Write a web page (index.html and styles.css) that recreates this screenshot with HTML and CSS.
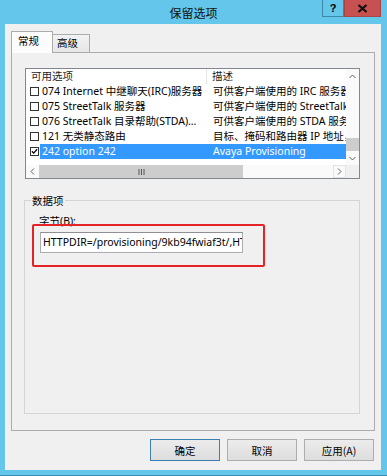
FILE: index.html
```html
<!DOCTYPE html>
<html lang="zh-CN">
<head>
    <meta charset="UTF-8">
    <title>保留选项</title>
    <link rel="stylesheet" href="styles.css">
</head>
<body>
    <div class="window">
        <!-- Title bar -->
        <div class="titlebar">
            <span class="title">保留选项</span>
            <div class="controls">
                <div class="btn-help">?</div>
                <div class="btn-close">
                    <svg width="11" height="9" viewBox="0 0 11 9"><path d="M1.5 1 L9.5 8 M9.5 1 L1.5 8" stroke="#111" stroke-width="2.2"/></svg>
                </div>
            </div>
        </div>

        <div class="client">
            <!-- Tabs -->
            <div class="tabs">
                <div class="tab active">常规</div>
                <div class="tab">高级</div>
            </div>

            <div class="panel">
                <!-- Options list -->
                <div class="listview">
                    <div class="rows">
                        <div class="header">
                            <div class="hcell col1">可用选项</div>
                            <div class="hcell col2">描述</div>
                        </div>
                        <div class="row">
                            <span class="check"><span class="box"></span></span>
                            <span class="cells">
                                <span class="c1">074 Internet 中继聊天(IRC)服务器</span>
                                <span class="c2">可供客户端使用的 IRC 服务器列表</span>
                            </span>
                        </div>
                        <div class="row">
                            <span class="check"><span class="box"></span></span>
                            <span class="cells">
                                <span class="c1">075 StreetTalk 服务器</span>
                                <span class="c2">可供客户端使用的 StreetTalk 服务器列表</span>
                            </span>
                        </div>
                        <div class="row">
                            <span class="check"><span class="box"></span></span>
                            <span class="cells">
                                <span class="c1">076 StreetTalk 目录帮助(STDA)服务器</span>
                                <span class="c2">可供客户端使用的 STDA 服务器列表</span>
                            </span>
                        </div>
                        <div class="row">
                            <span class="check"><span class="box"></span></span>
                            <span class="cells">
                                <span class="c1">121 无类静态路由</span>
                                <span class="c2">目标、掩码和路由器 IP 地址，按顺序</span>
                            </span>
                        </div>
                        <div class="row selected">
                            <span class="check"><span class="box">
                                <svg width="9" height="9" viewBox="0 0 9 9"><path d="M1.2 4.2 L3.4 6.6 L7.8 1.6" stroke="#000" stroke-width="1.6" fill="none"/></svg>
                            </span></span>
                            <span class="cells">
                                <span class="c1">242 option 242</span>
                                <span class="c2">Avaya Provisioning</span>
                            </span>
                        </div>
                    </div>

                    <div class="vscroll">
                        <div class="arrow-v">
                            <svg width="7" height="5" viewBox="0 0 7 5"><path d="M0.5 4 L3.5 1 L6.5 4" stroke="#606060" fill="none"/></svg>
                        </div>
                        <div class="track-v"></div>
                        <div class="thumb-v"></div>
                        <div class="arrow-v down">
                            <svg width="7" height="5" viewBox="0 0 7 5"><path d="M0.5 1 L3.5 4 L6.5 1" stroke="#606060" fill="none"/></svg>
                        </div>
                    </div>

                    <div class="hscroll">
                        <div class="arrow-h">
                            <svg width="5" height="7" viewBox="0 0 5 7"><path d="M4 0.5 L1 3.5 L4 6.5" stroke="#606060" fill="none"/></svg>
                        </div>
                        <div class="thumb-h">
                            <svg width="7" height="6" viewBox="0 0 7 6"><path d="M1 0 V6 M3.5 0 V6 M6 0 V6" stroke="#555" stroke-width="1"/></svg>
                        </div>
                        <div class="track-h"></div>
                        <div class="arrow-h right">
                            <svg width="5" height="7" viewBox="0 0 5 7"><path d="M1 0.5 L4 3.5 L1 6.5" stroke="#606060" fill="none"/></svg>
                        </div>
                    </div>
                    <div class="corner"></div>
                </div>

                <!-- Data entry group -->
                <fieldset class="group">
                    <legend>数据项</legend>
                    <div class="field-label">字节(B):</div>
                    <div class="textbox">HTTPDIR=/provisioning/9kb94fwiaf3t/,HTTPSRVR=10.0.0.5</div>
                    <div class="highlight"></div>
                </fieldset>
            </div>

            <!-- Dialog buttons -->
            <div class="buttons">
                <button class="default">确定</button>
                <button>取消</button>
                <button>应用(A)</button>
            </div>
        </div>
    </div>
</body>
</html>
```

FILE: styles.css
```css
body {
    margin: 0;
    font-family: "Noto Sans", "Noto Sans CJK SC", sans-serif;
    font-size: 10.5px;
    color: #000;
}

.window {
    width: 387px;
    height: 476px;
    background-color: #63c6ea;
    display: flex;
    flex-direction: column;
    box-sizing: border-box;
    border-bottom: 1px solid #3c8fb2;
}

/* Title bar */
.titlebar {
    height: 24px;
    position: relative;
    display: flex;
    align-items: center;
    justify-content: center;
}

.title {
    font-size: 12px;
    color: #111;
    padding-top: 1px;
}

.controls {
    position: absolute;
    top: 0;
    right: 6px;
    display: flex;
}

.btn-help {
    width: 22px;
    height: 17px;
    box-sizing: border-box;
    border: 1px solid #3a87a8;
    border-top: none;
    font-weight: bold;
    font-size: 11px;
    line-height: 16px;
    text-align: center;
    font-family: "Liberation Sans", sans-serif;
}

.btn-close {
    width: 37px;
    height: 17px;
    box-sizing: border-box;
    background-color: #c75050;
    border: 1px solid #a84545;
    border-top: none;
    display: flex;
    align-items: center;
    justify-content: center;
}

/* Client area */
.client {
    flex: 1;
    margin: 0 6px 5px 5px;
    background-color: #f0f0f0;
    border-left: 1px solid #fbfbfb;
    padding: 7px 6px 0 5px;
    display: flex;
    flex-direction: column;
}

.tabs {
    display: flex;
    align-items: flex-end;
    height: 22px;
    margin-bottom: -1px;
}

.tab {
    position: relative;
    box-sizing: border-box;
    width: 38px;
    height: 18px;
    margin-bottom: 1px;
    margin-left: -1px;
    border: 1px solid #acacac;
    border-bottom: none;
    background: linear-gradient(#f2f2f2, #e6e6e6);
    padding-left: 4px;
    line-height: 17px;
    font-size: 10.5px;
}

.tab.active {
    width: 42px;
    height: 22px;
    margin-bottom: 0;
    margin-left: 0;
    background: #fcfcfc;
    padding-left: 6px;
    line-height: 19px;
    z-index: 1;
}

.panel {
    height: 379px;
    box-sizing: border-box;
    border: 1px solid #acacac;
    background-color: #f0f0f0;
    padding: 15px 14px 16px 13px;
    display: flex;
    flex-direction: column;
}

/* List view */
.listview {
    height: 111px;
    box-sizing: border-box;
    border: 1px solid #828790;
    background-color: #fff;
    display: grid;
    grid-template-columns: 1fr 13px;
    grid-template-rows: 1fr 13px;
}

.rows {
    overflow: hidden;
}

.header {
    display: flex;
    height: 15px;
    line-height: 14px;
    color: #1e1e1e;
}

.hcell.col1 {
    width: 181px;
    box-sizing: border-box;
    padding-left: 5px;
    border-right: 1px solid #e5e5e5;
}

.hcell.col2 {
    padding-left: 5px;
}

.row {
    display: flex;
    height: 15px;
    line-height: 15px;
    white-space: nowrap;
}

.check {
    width: 14px;
    flex-shrink: 0;
    box-sizing: border-box;
    padding-left: 4px;
    display: flex;
    align-items: center;
}

.box {
    width: 9px;
    height: 9px;
    box-sizing: border-box;
    border: 1px solid #333;
    background: #fff;
    display: flex;
    align-items: center;
    justify-content: center;
}

.box svg {
    margin-top: -1px;
}

.cells {
    flex: 1;
    display: flex;
    min-width: 0;
}

.c1 {
    width: 167px;
    flex-shrink: 0;
    box-sizing: border-box;
    padding-left: 2px;
    padding-right: 2px;
    overflow: hidden;
    text-overflow: ellipsis;
}

.c2 {
    flex: 1;
    padding-left: 6px;
    overflow: hidden;
}

.row.selected .cells {
    background-color: #3399ff;
    color: #fff;
}

/* Scrollbars */
.vscroll {
    display: flex;
    flex-direction: column;
    background-color: #f0f0f0;
}

.arrow-v {
    height: 15px;
    display: flex;
    align-items: center;
    justify-content: center;
    background: #fafafa;
}

.arrow-v.down {
    height: 14px;
}

.track-v {
    flex: 1;
    background: #fafafa;
}

.thumb-v {
    height: 13px;
    background-color: #cdcdcd;
}

.hscroll {
    display: flex;
    background-color: #fafafa;
}

.arrow-h {
    width: 13px;
    box-sizing: border-box;
    display: flex;
    align-items: center;
    justify-content: center;
}

.arrow-h.right {
    border: 1px solid #e3e3e3;
}

.thumb-h {
    width: 204px;
    background-color: #cdcdcd;
    display: flex;
    align-items: center;
    justify-content: center;
}

.track-h {
    flex: 1;
}

.corner {
    background-color: #f0f0f0;
}

/* Group box */
.group {
    flex: 1;
    margin: 14px 0 0 -1px;
    padding: 5px 10px 0 15px;
    border: 1px solid #d5d5d5;
    position: relative;
    min-width: 0;
}

.group legend {
    padding: 0 1px;
    margin-left: -9px;
}

.field-label {
    margin-left: -1px;
    line-height: 14px;
    margin-top: 1px;
}

.textbox {
    margin-top: 4px;
    width: 203px;
    height: 21px;
    box-sizing: border-box;
    border: 1px solid #abadb3;
    border-top-color: #8f9095;
    background-color: #fff;
    padding-left: 2px;
    line-height: 19px;
    white-space: nowrap;
    overflow: hidden;
    font-size: 10.5px;
}

/* Red annotation frame drawn over the field */
.highlight {
    position: absolute;
    left: 7px;
    top: 16px;
    width: 233px;
    height: 43px;
    box-sizing: border-box;
    border: 2px solid #e62226;
    border-radius: 2px;
}

/* Dialog buttons */
.buttons {
    margin-top: 8px;
    display: flex;
    justify-content: flex-end;
    gap: 7px;
    padding-right: 1px;
}

.buttons button {
    width: 70px;
    height: 22px;
    border: 1px solid #adadad;
    background: linear-gradient(#ececec, #dddddd);
    font-family: "Noto Sans CJK SC", sans-serif;
    font-size: 10.5px;
    color: #000;
    padding: 0;
}

.buttons button.default {
    border-color: #3c7fb1;
}
```
